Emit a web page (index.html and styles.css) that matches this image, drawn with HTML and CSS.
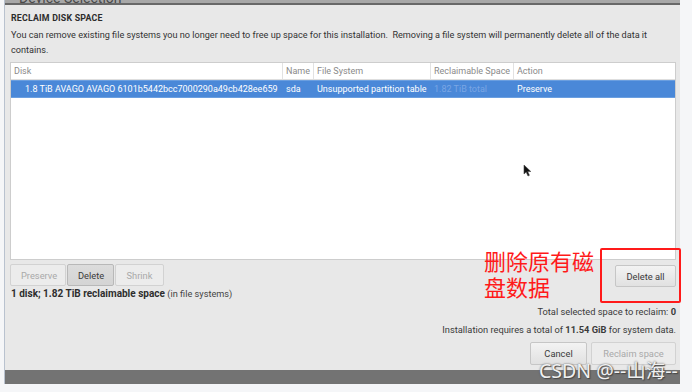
FILE: index.html
```html
<!DOCTYPE html>
<html lang="en">
<head>
    <meta charset="UTF-8">
    <title>Reclaim Disk Space</title>
    <link rel="stylesheet" href="styles.css">
</head>
<body>
    <div class="screen">
        <div class="dialog">
            <div class="topbar"><span>Device Selection</span></div>
            <div class="content">
                <h2 class="title">RECLAIM DISK SPACE</h2>
                <p class="desc">You can remove existing file systems you no longer need to free up space for this installation.&nbsp; Removing a file system will permanently delete all of the data it contains.</p>

                <div class="table">
                    <div class="row head">
                        <div class="cell c-disk">Disk</div>
                        <div class="cell c-name">Name</div>
                        <div class="cell c-fs">File System</div>
                        <div class="cell c-space">Reclaimable Space</div>
                        <div class="cell c-action">Action</div>
                    </div>
                    <div class="row selected">
                        <div class="cell c-disk indent">1.8 TiB AVAGO AVAGO 6101b5442bcc7000290a49cb428ee659</div>
                        <div class="cell c-name">sda</div>
                        <div class="cell c-fs">Unsupported partition table</div>
                        <div class="cell c-space faint">1.82 TiB total</div>
                        <div class="cell c-action">Preserve</div>
                    </div>
                </div>

                <div class="bottom">
                    <div class="left">
                        <div class="btn-group">
                            <button class="btn" disabled>Preserve</button>
                            <button class="btn pressed">Delete</button>
                            <button class="btn" disabled>Shrink</button>
                        </div>
                        <p class="summary"><b>1 disk; 1.82 TiB reclaimable space</b> <span>(in file systems)</span></p>
                    </div>
                    <div class="right">
                        <button class="btn wide">Delete all</button>
                        <p class="total">Total selected space to reclaim: <b>0</b></p>
                        <p class="needs">Installation requires a total of <b>11.54 GiB</b> for system data.</p>
                        <div class="actions">
                            <button class="btn cancel">Cancel</button>
                            <button class="btn reclaim" disabled>Reclaim space</button>
                        </div>
                    </div>
                </div>
            </div>
            <div class="bottombar"></div>
        </div>

        <div class="note">删除原有磁<br>盘数据</div>
        <div class="mark-box"></div>
        <svg class="cursor" width="9" height="13" viewBox="0 0 9 13">
            <path d="M1 1 L1 10 L3.2 8 L5 12 L6.4 11.3 L4.7 7.5 L7.8 7.5 Z" fill="#111" stroke="#444" stroke-width="0.6"/>
        </svg>
        <div class="watermark">CSDN @--山海--</div>
    </div>
</body>
</html>
```

FILE: styles.css
```css
body {
    margin: 0;
    background: #f5f6f8;
    font-family: Roboto, "Noto Sans", sans-serif;
    color: #2e2e2e;
}
.screen {
    position: relative;
    width: 692px;
    height: 392px;
    overflow: hidden;
}
.dialog {
    margin-left: 4px;
    width: 675px;
    height: 384px;
    border-left: 1px solid #b9c2cf;
    background: #e8e8e8;
    display: flex;
    flex-direction: column;
}
.topbar {
    height: 3px;
    overflow: hidden;
    background: #a8a8a8;
    border-bottom: 2px solid #686868;
}
.topbar span {
    display: block;
    margin-top: -10px;
    padding-left: 14px;
    font-size: 14px;
    color: #4a4a4a;
}
.content {
    flex: 1;
    padding: 0 4px 0 5px;
    display: flex;
    flex-direction: column;
}
.title {
    margin: 6px 0 0 1px;
    font-size: 8.8px;
    line-height: 14px;
    font-weight: bold;
    letter-spacing: 0.2px;
    color: #2c2c2c;
}
.desc {
    margin: 3px 0 0 1px;
    width: 662px;
    font-size: 9.15px;
    line-height: 15px;
    color: #333;
}
.table {
    margin-top: 4px;
    width: 664px;
    height: 196px;
    border: 1px solid #cdcdcd;
    background: #fff;
}
.row {
    display: flex;
    height: 16px;
    font-size: 9px;
    line-height: 16px;
}
.row.head {
    color: #8a8a8a;
    border-bottom: 1px solid #dedede;
}
.row.head .cell {
    border-right: 1px solid #e2e2e2;
}
.row.head .cell:last-child {
    border-right: none;
}
.row.selected {
    background: #4a88d8;
    color: #fff;
    border-top: 1px solid #6b9fe0;
    border-bottom: 1px solid #6b9fe0;
}
.cell {
    padding-left: 3px;
    white-space: nowrap;
    overflow: hidden;
    box-sizing: border-box;
}
.cell.indent {
    padding-left: 14px;
}
.c-disk { width: 272px; }
.c-name { width: 31px; }
.c-fs { width: 117px; }
.c-space { width: 83px; }
.c-action { flex: 1; }
.faint {
    color: #7aa6e4;
}
.bottom {
    flex: 1;
    display: flex;
    justify-content: space-between;
}
.left {
    padding-top: 4px;
}
.btn-group {
    display: flex;
}
.btn {
    height: 22px;
    padding: 0 10px;
    border: 1px solid #c6c6c6;
    border-radius: 2px;
    background: linear-gradient(#f3f3f3, #e1e1e1);
    font-family: inherit;
    font-size: 9.3px;
    color: #3a3a3a;
}
.btn:disabled {
    background: #ececec;
    color: #a9a9a9;
    border-color: #d2d2d2;
}
.btn-group .btn {
    margin-right: 1px;
}
.btn-group .btn:first-child {
    width: 56px;
}
.btn-group .btn:nth-child(2) {
    width: 47px;
}
.btn-group .btn:last-child {
    width: 49px;
}
.btn.pressed {
    background: linear-gradient(#dcdcdc, #d4d4d4);
    border-color: #b8b8b8;
}
.summary {
    margin: 1px 0 0 1px;
    font-size: 10px;
    line-height: 14px;
}
.summary span {
    font-size: 9.2px;
    color: #444;
}
.right {
    display: flex;
    flex-direction: column;
    align-items: flex-end;
    padding-top: 5px;
}
.btn.wide {
    width: 61px;
    height: 22px;
    padding: 0;
}
.total,
.needs {
    margin: 0;
    font-size: 9.3px;
    line-height: 18px;
    color: #3a3a3a;
}
.total {
    margin-top: 16px;
}
.actions {
    margin-top: 3px;
    display: flex;
    gap: 4px;
}
.btn.cancel {
    width: 57px;
    padding: 0;
    height: 23px;
}
.btn.reclaim {
    width: 85px;
    padding: 0;
    height: 23px;
}
.bottombar {
    height: 14px;
    background: #737373;
}
.note {
    position: absolute;
    left: 484px;
    top: 247px;
    font-family: "Noto Sans CJK SC", sans-serif;
    font-size: 22px;
    line-height: 26px;
    color: #ff1a1a;
}
.mark-box {
    position: absolute;
    left: 600px;
    top: 248px;
    width: 77px;
    height: 51px;
    border: 2px solid #ff1a1a;
    border-radius: 2px;
}
.cursor {
    position: absolute;
    left: 523px;
    top: 164px;
}
.watermark {
    position: absolute;
    left: 539px;
    top: 358px;
    font-family: "Noto Sans", "Noto Sans CJK SC", sans-serif;
    font-size: 19.5px;
    line-height: 26px;
    color: #f0f0f0;
    text-shadow: 0 0 2px #555, 1px 1px 1px #444;
}
```
